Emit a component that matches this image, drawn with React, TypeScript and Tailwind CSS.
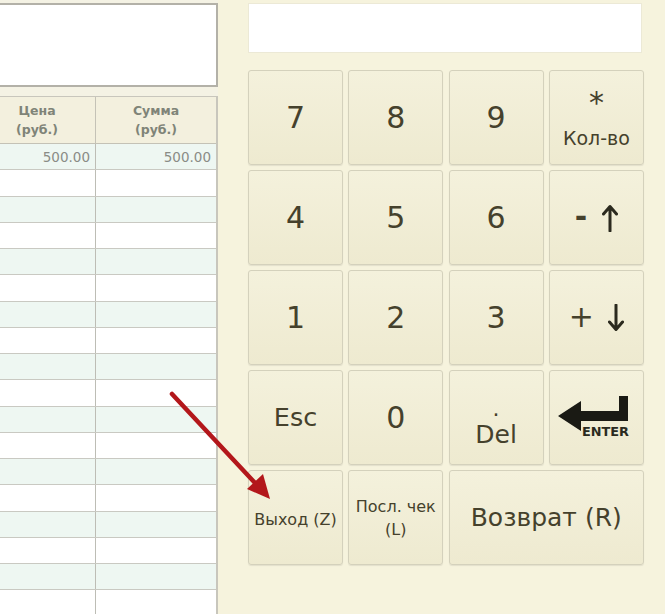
import React from "react";

const font = { fontFamily: '"DejaVu Sans", Verdana, sans-serif' };

function Key({ children, className = "" }: { children: React.ReactNode; className?: string }) {
  return (
    <div
      className={
        "flex flex-col items-center justify-center rounded-[3px] border border-[#d4d1bc] bg-gradient-to-b from-[#f4f1dc] to-[#eeead0] text-[#45412c] shadow-[0_1px_1px_rgba(0,0,0,0.08)] " +
        className
      }
    >
      {children}
    </div>
  );
}

function Arrow({ up }: { up: boolean }) {
  return (
    <svg width="16" height="28" viewBox="0 0 16 28" className={up ? "" : "rotate-180"}>
      <path d="M8 27 V3 M1.5 10 L8 2.5 L14.5 10" fill="none" stroke="#2b2a1e" strokeWidth="3" strokeLinecap="round" strokeLinejoin="round" />
    </svg>
  );
}

function EnterIcon() {
  return (
    <svg width="76" height="44" viewBox="0 0 76 44">
      <polygon points="0,20 23,5 23,15 61,15 61,0 70,0 70,25 23,25 23,35" fill="#1a1a14" />
      <text
        x="24"
        y="40"
        fontFamily='"DejaVu Sans Condensed", "DejaVu Sans", sans-serif'
        fontWeight="bold"
        fontSize="13"
        textLength="47"
        lengthAdjust="spacingAndGlyphs"
        fill="#2a2a20"
      >
        ENTER
      </text>
    </svg>
  );
}

export default function App() {
  const rows = Array.from({ length: 18 }, (_, i) => i);
  return (
    <div className="relative flex h-[614px] w-[665px] overflow-hidden bg-[#f6f3dd]" style={font}>
      {/* Left panel */}
      <div className="flex w-[218px] shrink-0 flex-col overflow-hidden bg-[#f4f2e4]">
        <div className="ml-[-4px] mt-[3px] h-[84px] shrink-0 border-2 border-[#b3b1a8] bg-white" />
        <div className="ml-[-22px] mt-[9px] shrink-0 border-l border-r-2 border-t border-[#c8c6bc] bg-white">
          <div className="flex h-[47px] border-b border-[#c4c2b6] bg-[#f3f0de] text-[12.5px] font-bold leading-[19px] text-[#7f8478]">
            <div className="flex w-[117px] flex-col items-center justify-center border-r border-[#c4c2b6]">
              <span>Цена</span>
              <span>(руб.)</span>
            </div>
            <div className="flex flex-1 flex-col items-center justify-center">
              <span>Сумма</span>
              <span>(руб.)</span>
            </div>
          </div>
          {rows.map((i) => (
            <div
              key={i}
              className={
                "flex h-[26.25px] border-b border-[#c9c9c2] text-[13.5px] text-[#8a8c86] " +
                (i % 2 === 0 ? "bg-[#eef7f2]" : "bg-white")
              }
            >
              <div className="flex w-[117px] items-center justify-end border-r border-[#bdbdb5] pr-[5px]">
                {i === 0 ? "500.00" : ""}
              </div>
              <div className="flex flex-1 items-center justify-end pr-[5px]">{i === 0 ? "500.00" : ""}</div>
            </div>
          ))}
        </div>
      </div>

      {/* Right panel */}
      <div className="flex flex-1 flex-col pl-[30px] pt-[3px]">
        <div className="h-[50px] w-[394px] border border-[#ece9d6] bg-white" />
        <div className="mt-[17px] grid grid-cols-[repeat(4,95px)] grid-rows-[repeat(5,95px)] gap-x-[5.3px] gap-y-[5px]">
          <Key className="text-[30px]">7</Key>
          <Key className="text-[30px]">8</Key>
          <Key className="text-[30px]">9</Key>
          <Key>
            <span className="mt-[4px] text-[30px] leading-[24px]">*</span>
            <span className="mt-[12px] text-[19px] leading-[22px]">Кол-во</span>
          </Key>

          <Key className="text-[30px]">4</Key>
          <Key className="text-[30px]">5</Key>
          <Key className="text-[30px]">6</Key>
          <Key className="text-[30px]">
            <span className="flex items-center gap-[15px]">
              <span className="mb-[3px] font-bold">-</span>
              <Arrow up />
            </span>
          </Key>

          <Key className="text-[30px]">1</Key>
          <Key className="text-[30px]">2</Key>
          <Key className="text-[30px]">3</Key>
          <Key className="text-[30px]">
            <span className="flex items-center gap-[14px]">
              <span className="mb-[3px]">+</span>
              <Arrow up={false} />
            </span>
          </Key>

          <Key className="text-[25.5px]">Esc</Key>
          <Key className="text-[30px]">0</Key>
          <Key className="pt-[14px]">
            <span className="text-[22px] leading-[16px]">.</span>
            <span className="mt-[4px] text-[25px] leading-[28px]">Del</span>
          </Key>
          <Key>
            <EnterIcon />
          </Key>

          <Key className="pt-[5px] text-[16px] text-[#5e5b48]">Выход (Z)</Key>
          <Key className="text-center text-[16px] leading-[23px] text-[#5e5b48]">
            <span>Посл. чек</span>
            <span>(L)</span>
          </Key>
          <Key className="col-span-2 text-[25px]">Возврат (R)</Key>
        </div>
      </div>

      {/* Red arrow annotation */}
      <svg className="pointer-events-none absolute left-0 top-0" width="665" height="614">
        <line x1="172" y1="394" x2="256" y2="484" stroke="#b3171b" strokeWidth="4.5" strokeLinecap="round" />
        <polygon points="270,499 247,489 263,474" fill="#b3171b" />
      </svg>
    </div>
  );
}
